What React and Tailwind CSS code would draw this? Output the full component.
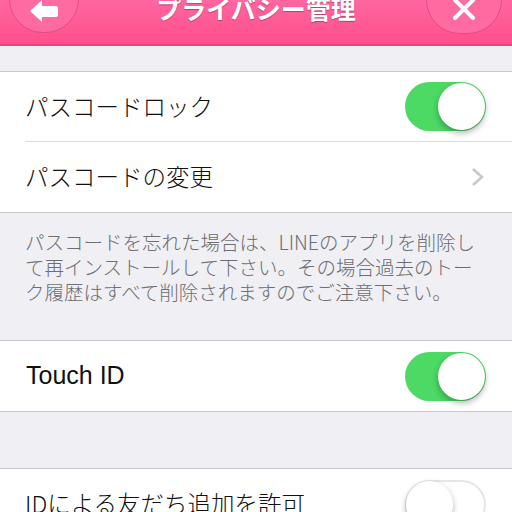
import React from "react";

const font = { fontFamily: '"Noto Sans CJK JP", "Noto Sans", sans-serif' };

function Toggle({ on }) {
  if (on) {
    return (
      <div className="relative w-[81px] h-[49px] rounded-full bg-[#4cd964]">
        <div className="absolute right-[1px] top-[1px] w-[47px] h-[47px] rounded-full bg-white shadow-[0_3px_6px_rgba(0,0,0,0.3)]" />
      </div>
    );
  }
  return (
    <div className="relative w-[81px] h-[49px] rounded-full bg-white border-[2px] border-[#e5e5ea]">
      <div className="absolute left-[-1px] top-[-1px] w-[47px] h-[47px] rounded-full bg-white shadow-[0_3px_6px_rgba(0,0,0,0.3)]" />
    </div>
  );
}

export default function App() {
  return (
    <div className="w-[512px] h-[512px] overflow-hidden bg-[#efeff4] flex flex-col font-light" style={font}>
      {/* Header */}
      <div className="relative h-[46px] shrink-0 bg-gradient-to-b from-[#ff66a0] to-[#ff4f8b] border-b-[2px] border-[#e9467f]">
        <div className="absolute left-[9px] top-[-40px] w-[70px] h-[73px] rounded-[34px] bg-[#ff6aa1] border border-[#e44a82] flex items-end justify-center pb-[10px]">
          <svg width="30" height="22" viewBox="0 0 30 22">
            <path d="M1 11 L13 0 L13 6 L27 6 Q29 6 29 8 L29 15 Q29 17 27 17 L13 17 L13 22 Z" fill="white" />
          </svg>
        </div>
        <div className="absolute right-[10px] top-[-40px] w-[76px] h-[74px] rounded-[34px] bg-[#ff6aa1] border border-[#e44a82] flex items-end justify-center pb-[12px]">
          <svg width="24" height="24" viewBox="0 0 24 24">
            <path d="M3 3 L21 21 M21 3 L3 21" stroke="white" strokeWidth="4" strokeLinecap="round" />
          </svg>
        </div>
        <div className="absolute left-0 right-0 top-[-12px] text-center text-white text-[25px] font-bold leading-[40px] [text-shadow:0_1px_1px_rgba(0,0,0,0.3)]">
          プライバシー管理
        </div>
      </div>

      <div className="h-[26px] shrink-0 border-b border-[#c8c7cc]" />

      <div className="bg-white shrink-0">
        <div className="pl-[25px]">
          <div className="h-[70px] flex items-center justify-between pr-[26px] border-b border-[#dcdce0]">
            <span className="text-[23.5px] text-[#111]">パスコードロック</span>
            <Toggle on />
          </div>
        </div>
        <div className="h-[70px] flex items-center justify-between pl-[25px] pr-[26px]">
          <span className="text-[23.5px] text-[#111]">パスコードの変更</span>
          <svg width="14" height="20" viewBox="0 0 14 20" className="mr-[1px]">
            <path d="M2 2 L11 10 L2 18" stroke="#c7c7cc" strokeWidth="2.5" fill="none" />
          </svg>
        </div>
      </div>

      <div className="shrink-0 border-t border-[#c8c7cc] px-[25px] pt-[16px] h-[128px] text-[19.5px] leading-[25px] text-[#6d6d72]">
        パスコードを忘れた場合は、LINEのアプリを削除して再インストールして下さい。その場合過去のトーク履歴はすべて削除されますのでご注意下さい。
      </div>

      <div className="bg-white shrink-0 border-t border-b border-[#c8c7cc]">
        <div className="h-[70px] flex items-center justify-between pl-[26px] pr-[26px]">
          <span className="text-[25px] text-[#111] font-normal" style={{ fontFamily: '"Liberation Sans", sans-serif' }}>Touch ID</span>
          <Toggle on />
        </div>
      </div>

      <div className="h-[57px] shrink-0 border-b border-[#c8c7cc]" />

      <div className="bg-white shrink-0">
        <div className="h-[70px] flex items-center justify-between pl-[25px] pr-[26px]">
          <span className="text-[23.5px] text-[#111]">IDによる友だち追加を許可</span>
          <Toggle on={false} />
        </div>
      </div>
    </div>
  );
}
